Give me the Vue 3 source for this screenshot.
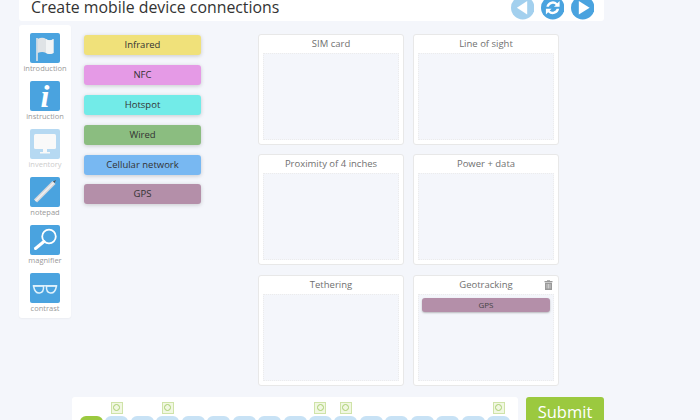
<script setup>
const tools = [
  { name: 'introduction', icon: 'flag' },
  { name: 'instruction', icon: 'info' },
  { name: 'inventory', icon: 'monitor', off: true },
  { name: 'notepad', icon: 'pencil' },
  { name: 'magnifier', icon: 'glass' },
  { name: 'contrast', icon: 'specs' }
]
const chips = [
  { t: 'Infrared', c: 'yellow' },
  { t: 'NFC', c: 'pink' },
  { t: 'Hotspot', c: 'cyan' },
  { t: 'Wired', c: 'green' },
  { t: 'Cellular network', c: 'blue' },
  { t: 'GPS', c: 'mauve' }
]
const cards = [
  { t: 'SIM card' },
  { t: 'Line of sight' },
  { t: 'Proximity of 4 inches' },
  { t: 'Power + data' },
  { t: 'Tethering' },
  { t: 'Geotracking', placed: 'GPS' }
]
const flagged = [1, 3, 9, 10, 16]
const steps = Array.from({ length: 17 }, (_, i) => ({ i, q: flagged.includes(i) }))
</script>

<template>
  <div class="page">
    <header class="top">
      <h1>Create mobile device connections</h1>
      <div class="nav">
        <svg class="round dim" viewBox="0 0 24 24"><circle cx="12" cy="12" r="12" fill="#4aa3df"/><path d="M16.5 5v14L6 12z" fill="#fff"/></svg>
        <svg class="round" viewBox="0 0 24 24"><circle cx="12" cy="12" r="12" fill="#4aa3df"/><path d="M5.5 11a6.6 6.6 0 0 1 11.2-3.6L19 5.2V11h-5.800l1.900-1.900A4.300 4.300 0 0 0 8 11zM18.500 13a6.600 6.600 0 0 1-11.200 3.600L5 18.800V13h5.800l-1.900 1.900A4.300 4.300 0 0 0 16 13z" fill="#fff"/></svg>
        <svg class="round" viewBox="0 0 24 24"><circle cx="12" cy="12" r="12" fill="#4aa3df"/><path d="M8 5v14l11-7z" fill="#fff"/></svg>
      </div>
    </header>

    <main class="main">
      <aside class="tools">
        <div v-for="tool in tools" :key="tool.name" class="tool" :class="{ off: tool.off }">
          <div class="tile">
            <svg v-if="tool.icon === 'flag'" viewBox="0 0 30 30"><path d="M7 5v23" stroke="#dfe3e6" stroke-width="1.600" fill="none"/><path d="M7.500 6q5-2.500 8.500 0t7.500 0v14q-4 2-7.500 0t-8.500 0z" fill="#dfe3e6"/><path d="M16 6q3.500 2.500 7.500 0v14q-4 2-7.500 0z" fill="#f2f4f5"/></svg>
            <span v-else-if="tool.icon === 'info'" class="info">i</span>
            <svg v-else-if="tool.icon === 'monitor'" viewBox="0 0 30 30"><rect x="4" y="5" width="22" height="15" rx="1.500" fill="#f1f1f1"/><path d="M13 20h4v3h3v1.500h-10V23h3z" fill="#f1f1f1"/></svg>
            <svg v-else-if="tool.icon === 'pencil'" viewBox="0 0 30 30"><path d="M5.500 24 24 5.500" stroke="#d6d9dc" stroke-width="4.500" fill="none"/><path d="M5.500 24 24 5.500" stroke="#eef0f1" stroke-width="1.500" fill="none"/><path d="M23 4.500l3-1.500-1.500 3z" fill="#555"/></svg>
            <svg v-else-if="tool.icon === 'glass'" viewBox="0 0 30 30"><circle cx="19" cy="11.500" r="6.800" fill="none" stroke="#fff" stroke-width="1.800"/><path d="M14 16.500 5.500 23.500" stroke="#fff" stroke-width="3" stroke-linecap="round"/></svg>
            <svg v-else viewBox="0 0 30 30"><path d="M3 12.800h24" stroke="#dff1fb" stroke-width="1.500" fill="none"/><path d="M3.500 13h10q.500 6.500-4 7t-6-7zM16.500 13h10q-1.500 7.500-6 7t-4-7z" fill="none" stroke="#dff1fb" stroke-width="1.500"/></svg>
          </div>
          <span class="label">{{ tool.name }}</span>
        </div>
      </aside>

      <section class="chips">
        <div v-for="chip in chips" :key="chip.t" class="chip" :class="chip.c">{{ chip.t }}</div>
      </section>

      <section class="cards">
        <div v-for="card in cards" :key="card.t" class="card">
          <div class="card-title">
            {{ card.t }}
            <svg v-if="card.placed" class="trash" viewBox="0 0 9 10"><path d="M3 1V.3h3V1h2.500v1.200H.5V1zM1 2.800h7V10H1z" fill="#999"/><path d="M3 4v4.500M4.500 4v4.500M6 4v4.500" stroke="#eee" stroke-width=".6"/></svg>
          </div>
          <div class="drop">
            <div v-if="card.placed" class="placed mauve">{{ card.placed }}</div>
          </div>
        </div>
      </section>
    </main>

    <footer class="bottom">
      <div class="steps">
        <div v-for="s in steps" :key="s.i" class="step">
          <span class="qbox" :class="{ hidden: !s.q }"><i></i></span>
          <span class="pill" :class="{ now: s.i === 0 }"></span>
        </div>
      </div>
      <button class="submit">Submit</button>
    </footer>
  </div>
</template>

<style>
html, body { margin: 0; background: #f4f6fb; }
</style>

<style scoped>
.page {
  width: 700px;
  height: 420px;
  overflow: hidden;
  background: #f4f6fb;
  font-family: "Open Sans", "Noto Sans", sans-serif;
  display: flex;
  flex-direction: column;
}
.top {
  margin-left: 19px;
  width: 585px;
  height: 21px;
  flex: none;
  background: #fff;
  border-radius: 0 0 3px 3px;
  display: flex;
  justify-content: space-between;
  align-items: flex-start;
  padding: 0 10px 0 12px;
  box-sizing: border-box;
}
.top h1 {
  margin: 0;
  font-size: 15.850px;
  line-height: 14px;
  font-weight: 400;
  color: #333;
  white-space: nowrap;
}
.nav {
  display: flex;
  gap: 6.500px;
  margin-top: -4px;
}
.round { width: 23.500px; height: 23.500px; display: block; }
.dim { opacity: .5; }
.main {
  display: flex;
  margin-top: 4px;
  align-items: flex-start;
  flex: none;
}
.tools {
  margin-left: 19px;
  width: 52px;
  height: 293px;
  background: #fff;
  border-radius: 3px;
  box-shadow: 0 1px 2px rgba(0,0,0,.04);
  padding-top: 8px;
  box-sizing: border-box;
  display: flex;
  flex-direction: column;
  align-items: center;
}
.tool {
  flex: none;
  height: 48px;
  display: flex;
  flex-direction: column;
  align-items: center;
}
.tile {
  width: 30px;
  height: 30px;
  background: #4aa3df;
  border-radius: 2px;
  display: flex;
  align-items: center;
  justify-content: center;
}
.tile svg { width: 30px; height: 30px; display: block; }
.info {
  font-family: "Liberation Serif", serif;
  font-style: italic;
  font-weight: 700;
  font-size: 32px;
  line-height: 30px;
  color: #fff;
}
.off .tile { opacity: .4; }
.label {
  font-size: 7.500px;
  line-height: 10px;
  color: #999;
  white-space: nowrap;
}
.off .label { color: #ccc; }
.chips {
  margin-left: 13px;
  margin-top: 10px;
  width: 117px;
  display: flex;
  flex-direction: column;
  gap: 9.900px;
}
.chip {
  height: 20px;
  line-height: 19px;
  text-align: center;
  font-size: 9.500px;
  color: #333;
  border-radius: 3px;
  box-shadow: 0 1px 4px rgba(0,0,0,.18);
}
.yellow { background: #f0e17a; }
.pink { background: #e59ae6; }
.cyan { background: #72ebe8; }
.green { background: #8bbd80; }
.blue { background: #78b8f2; }
.mauve { background: #b48fa9; }
.cards {
  margin-left: 57px;
  margin-top: 9px;
  display: grid;
  grid-template-columns: 146px 146px;
  column-gap: 9px;
  row-gap: 9.300px;
}
.card {
  height: 111px;
  box-sizing: border-box;
  background: #fff;
  border: 1px solid #e8e8e8;
  border-radius: 3px;
  padding: 0 4px 4px;
  display: flex;
  flex-direction: column;
}
.card-title {
  position: relative;
  height: 18px;
  line-height: 17px;
  text-align: center;
  font-size: 9.500px;
  color: #707070;
  white-space: nowrap;
}
.trash {
  position: absolute;
  right: 1px;
  top: 4px;
  width: 9px;
  height: 10px;
}
.drop {
  flex: 1;
  background: #f4f6fb;
  border: 1px dotted #ececec;
  padding: 3px;
  box-sizing: border-box;
}
.placed {
  height: 14px;
  line-height: 14px;
  text-align: center;
  font-size: 8px;
  color: #444;
  border-radius: 3px;
  box-shadow: 0 1px 2px rgba(0,0,0,.25);
}
.bottom {
  display: flex;
  margin-top: 11px;
  margin-left: 72px;
  align-items: flex-start;
  gap: 8px;
}
.steps {
  width: 446px;
  height: 23px;
  box-sizing: border-box;
  background: #fff;
  border-radius: 3px 3px 0 0;
  padding: 5px 0 0 8px;
  display: grid;
  grid-template-columns: repeat(17, 23px);
  column-gap: 2.450px;
  overflow: hidden;
}
.step {
  display: flex;
  flex-direction: column;
  align-items: center;
}
.qbox {
  flex: none;
  width: 12px;
  height: 12px;
  box-sizing: border-box;
  background: #f1f7e2;
  border: 1px solid #cfe3a8;
  display: flex;
  align-items: center;
  justify-content: center;
}
.qbox i {
  width: 7px;
  height: 7px;
  box-sizing: border-box;
  border: 1px solid #a9d070;
  border-radius: 50%;
}
.hidden { visibility: hidden; }
.pill {
  flex: none;
  margin-top: 2px;
  width: 23px;
  height: 12px;
  background: #c8e2f5;
  border-radius: 6px 6px 0 0;
}
.now { background: #9bc93f; }
.submit {
  width: 78px;
  height: 23px;
  box-sizing: border-box;
  border: 0;
  padding: 8px 0 1px;
  background: #9bc93f;
  color: #fff;
  font-family: inherit;
  font-size: 16.500px;
  line-height: 14px;
  border-radius: 3px 3px 0 0;
}
</style>
